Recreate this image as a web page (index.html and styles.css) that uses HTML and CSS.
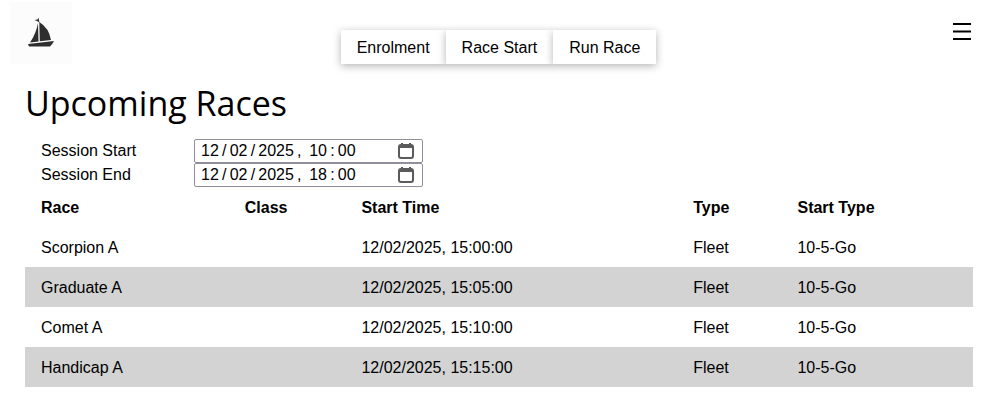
FILE: index.html
```
<!DOCTYPE html>
<html lang="en-GB">
<head>
  <meta charset="UTF-8">
  <meta name="viewport" content="width=device-width, initial-scale=1.0">
  <title>Upcoming Races</title>
  <link rel="stylesheet" href="styles.css">
</head>
<body>
  <header class="top-bar">
    <a class="logo" href="#" aria-label="Home">
      <svg viewBox="0 0 62 62" width="62" height="62" aria-hidden="true">
        <path d="M24.500 18 L27.500 17.500 L28.500 15.500 L29.500 21 L28 19.500 Z"/>
        <path d="M28 21 L28.500 39.500 L20 40.500 Q26 32 28 21 Z"/>
        <path d="M29.300 20 Q39 26 41 38 L29.800 39.300 Z"/>
        <path d="M18 42 L44 39 Q42 43 40 44.500 L19 44.500 Z"/>
      </svg>
    </a>
    <nav class="nav">
      <a class="nav-btn" href="#">Enrolment</a>
      <a class="nav-btn" href="#">Race Start</a>
      <a class="nav-btn" href="#">Run Race</a>
    </nav>
    <button class="menu-btn" type="button" aria-label="Menu">
      <svg viewBox="0 0 18 18" width="18" height="18" aria-hidden="true">
        <path d="M0 0h18v2H0zM0 7.500h18v2H0zM0 15h18v2H0z"/>
      </svg>
    </button>
  </header>

  <main class="content">
    <h1 class="title">Upcoming Races</h1>

    <form class="session">
      <label for="sessionStart">Session Start</label>
      <div class="date-box">
        <input type="text" id="sessionStart" value="12&#8201;/&#8201;02&#8201;/&#8201;2025&#8201;, &#8201;10&#8201;:&#8201;00">
        <svg class="calendar" viewBox="0 0 16 16" width="16" height="16" aria-hidden="true">
          <rect x="1" y="2" width="14" height="13" rx="2"/>
          <path d="M1 4h14M4 0v3M12 0v3"/>
        </svg>
      </div>
      <label for="sessionEnd">Session End</label>
      <div class="date-box">
        <input type="text" id="sessionEnd" value="12&#8201;/&#8201;02&#8201;/&#8201;2025&#8201;, &#8201;18&#8201;:&#8201;00">
        <svg class="calendar" viewBox="0 0 16 16" width="16" height="16" aria-hidden="true">
          <rect x="1" y="2" width="14" height="13" rx="2"/>
          <path d="M1 4h14M4 0v3M12 0v3"/>
        </svg>
      </div>
    </form>

    <table class="races">
      <thead>
        <tr>
          <th class="col-race">Race</th>
          <th class="col-class">Class</th>
          <th class="col-time">Start Time</th>
          <th class="col-type">Type</th>
          <th>Start Type</th>
        </tr>
      </thead>
      <tbody>
        <tr>
          <td>Scorpion A</td>
          <td></td>
          <td>12/02/2025, 15:00:00</td>
          <td>Fleet</td>
          <td>10-5-Go</td>
        </tr>
        <tr>
          <td>Graduate A</td>
          <td></td>
          <td>12/02/2025, 15:05:00</td>
          <td>Fleet</td>
          <td>10-5-Go</td>
        </tr>
        <tr>
          <td>Comet A</td>
          <td></td>
          <td>12/02/2025, 15:10:00</td>
          <td>Fleet</td>
          <td>10-5-Go</td>
        </tr>
        <tr>
          <td>Handicap A</td>
          <td></td>
          <td>12/02/2025, 15:15:00</td>
          <td>Fleet</td>
          <td>10-5-Go</td>
        </tr>
      </tbody>
    </table>
  </main>
</body>
</html>
```
FILE: styles.css
```
body {
  margin: 0;
  background: #fff;
  color: #000;
  font-family: "Liberation Sans", Arial, sans-serif;
  font-size: 16px;
  line-height: 18px;
}
.top-bar {
  display: grid;
  grid-template-columns: 1fr auto 1fr;
  align-items: start;
  padding: 2px 28px 0 10px;
}
.logo {
  display: block;
  width: 62px;
  height: 62px;
  background: #fcfcfc;
  fill: #2e2e2e;
}
.logo svg {
  display: block;
}
.nav {
  display: flex;
  margin-top: 28px;
  padding-left: 16px;
}
.nav-btn {
  padding: 9px 16px 7px;
  background: #fff;
  color: #000;
  text-decoration: none;
  box-shadow: 0 2px 8px rgba(0, 0, 0, 0.3);
}
.menu-btn {
  justify-self: end;
  margin-top: 21px;
  padding: 0;
  border: none;
  background: none;
  cursor: pointer;
}
.menu-btn svg {
  display: block;
}
.content {
  padding: 0 26px 0 25px;
}
.title {
  margin: 15px 0 12px;
  font-family: "Segoe UI", "Open Sans", sans-serif;
  font-size: 34px;
  font-weight: 400;
  line-height: 48px;
}
.session {
  display: grid;
  grid-template-columns: 153px 229px;
  align-items: center;
  padding-left: 16px;
}
.date-box {
  display: flex;
  align-items: center;
  box-sizing: border-box;
  height: 24px;
  padding: 0 8px 0 6px;
  border: 1px solid #8f8f9d;
  border-radius: 2px;
}
.date-box input {
  flex: 1;
  min-width: 0;
  padding: 0;
  border: none;
  background: none;
  font: inherit;
}
.calendar {
  fill: none;
  stroke: #5b5b5b;
  stroke-width: 2;
}
.races {
  width: 100%;
  border-collapse: collapse;
}
.races th,
.races td {
  height: 18px;
  padding: 12px 16px 10px;
  text-align: left;
}
.races tbody tr:nth-child(even) {
  background: #d3d3d3;
}
.col-race {
  width: 21.5%;
}
.col-class {
  width: 12.3%;
}
.col-time {
  width: 35%;
}
.col-type {
  width: 11%;
}
```
